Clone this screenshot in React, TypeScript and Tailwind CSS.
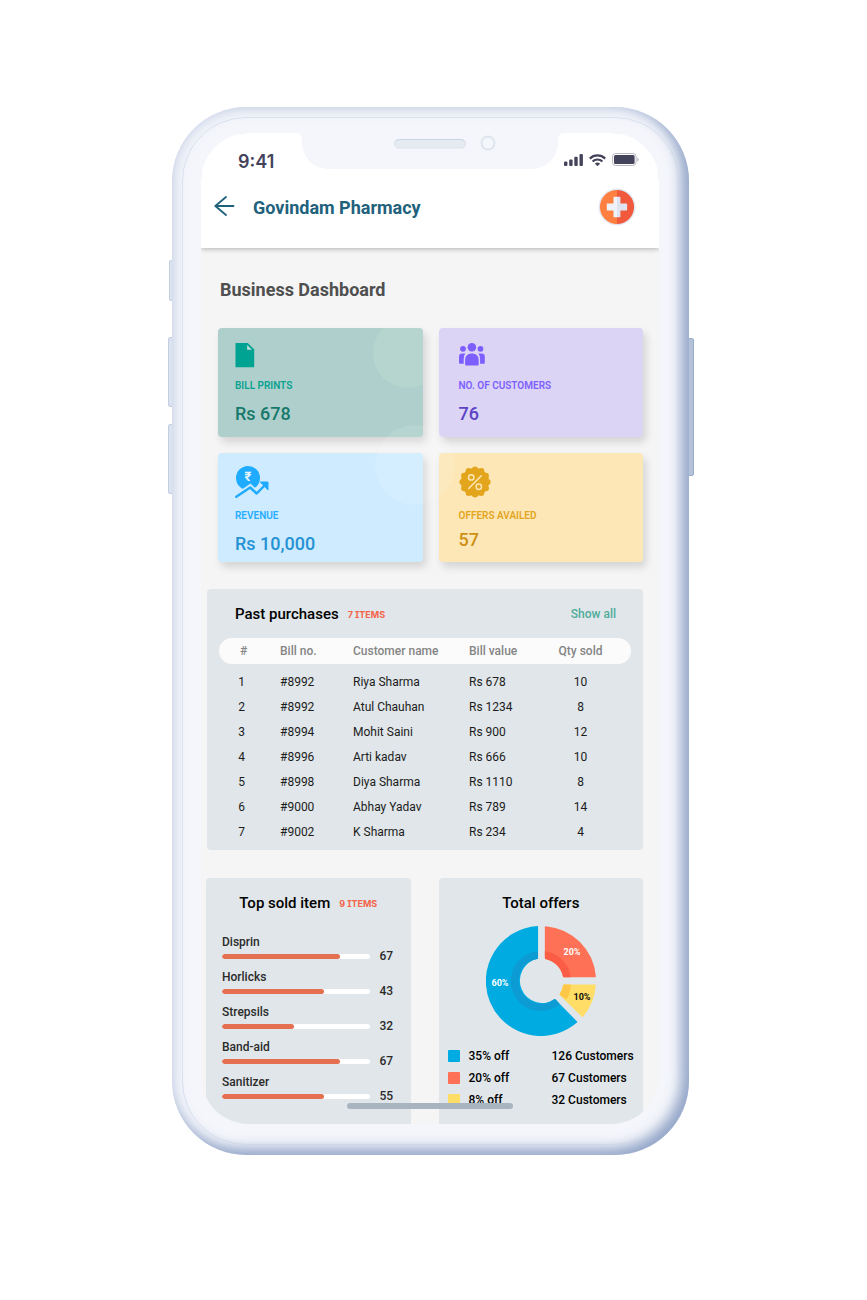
import React from "react";

const purchases = [
  ["1", "#8992", "Riya Sharma", "Rs 678", "10"],
  ["2", "#8992", "Atul Chauhan", "Rs 1234", "8"],
  ["3", "#8994", "Mohit Saini", "Rs 900", "12"],
  ["4", "#8996", "Arti kadav", "Rs 666", "10"],
  ["5", "#8998", "Diya Sharma", "Rs 1110", "8"],
  ["6", "#9000", "Abhay Yadav", "Rs 789", "14"],
  ["7", "#9002", "K Sharma", "Rs 234", "4"],
];

const topItems = [
  { name: "Disprin", sold: 67, fill: 80 },
  { name: "Horlicks", sold: 43, fill: 69 },
  { name: "Strepsils", sold: 32, fill: 49 },
  { name: "Band-aid", sold: 67, fill: 80 },
  { name: "Sanitizer", sold: 55, fill: 69 },
];

const offers = [
  { swatch: "bg-[#00abe1]", label: "35% off", customers: "126 Customers" },
  { swatch: "bg-[#ff7156]", label: "20% off", customers: "67 Customers" },
  { swatch: "bg-[#ffdd67]", label: "8% off", customers: "32 Customers" },
];

function FileIcon() {
  return (
    <svg className="h-[27px] w-5" viewBox="0 -1 20 27" aria-hidden="true">
      <path d="M.5 1h12.300l6.400 6.400v17.800H.5z" fill="#00a391" />
      <path d="M12.200 3v4.700h4.700z" fill="#c4ded9" />
    </svg>
  );
}

function PeopleIcon() {
  return (
    <svg className="h-[27px] w-[26px]" viewBox="0 -1 26 27" aria-hidden="true" fill="#7d5fff">
      <circle cx="12.900" cy="5.300" r="4.300" />
      <circle cx="4" cy="6.800" r="2.900" />
      <circle cx="21.500" cy="6.800" r="2.900" />
      <path d="M6.100 22.600v-5a6 6 0 0 1 6-6h1.600a6 6 0 0 1 6 6v5q0 1-1 1H7.100q-1 0-1-1z" />
      <path d="M6.300 11.600H3a3 3 0 0 0-3 3v6.200q0 .9.900.9h3.800v-4.500q0-3.300 1.600-5.600z" />
      <path d="M19.500 11.600h3.300a3 3 0 0 1 3 3v6.200q0 .9-.9.9h-3.800v-4.500q0-3.300-1.600-5.600z" />
    </svg>
  );
}

function RevenueIcon() {
  return (
    <svg className="h-8 w-[34px]" viewBox="0 0 34 32" aria-hidden="true">
      <circle cx="13" cy="12" r="12" fill="#1fabff" />
      <path d="M1.200 30.500 15.200 20.700l6.500 6L31 17" fill="none" stroke="#cfebff" strokeWidth="5" />
      <path d="M1.300 30.700 15.200 21.500l6.500 6L30 19" fill="none" stroke="#1fabff" strokeWidth="2.500" strokeLinecap="round" strokeLinejoin="round" />
      <path d="M25.300 16h7.700v7.900z" fill="#1fabff" stroke="#1fabff" strokeLinejoin="round" />
      <text x="13" y="15" textAnchor="middle" fontSize="13" fontWeight="700" fontFamily="Roboto, sans-serif" fill="#e8f6ff">₹</text>
    </svg>
  );
}

const lobes = Array.from({ length: 12 }, (_, i) => {
  const a = (i * Math.PI) / 6;
  return { x: 16 + 12.6 * Math.sin(a), y: 16 - 12.6 * Math.cos(a) };
});

function OfferIcon() {
  return (
    <svg className="h-8 w-8" viewBox="0 0 32 32" aria-hidden="true" fill="#e3a51c">
      <circle cx="16" cy="16" r="14" />
      {lobes.map((p, i) => (
        <circle key={i} cx={p.x} cy={p.y} r="3" />
      ))}
      <g fill="none" stroke="#fde7b7" strokeWidth="1.500" strokeLinecap="round">
        <path d="M22.300 9.800 9.700 22.500" />
        <circle cx="12.200" cy="11.400" r="2.700" />
        <circle cx="19.800" cy="20.800" r="2.700" />
      </g>
    </svg>
  );
}

type CardProps = {
  tone: string;
  icon: React.ReactNode;
  label: string;
  labelColor: string;
  value: string;
  valueColor: string;
  valueGap?: string;
  children?: React.ReactNode;
};

function StatCard({ tone, icon, label, labelColor, value, valueColor, valueGap = "mt-3", children }: CardProps) {
  return (
    <article className={`relative flex h-[109px] flex-col items-start overflow-hidden rounded-[4px] pt-[13px] shadow-[3px_5px_9px_rgba(0,0,0,0.14)] ${tone}`}>
      {children}
      {icon}
      <h2 className={`mt-3 text-[10px]/[12px] font-semibold ${labelColor}`}>{label}</h2>
      <p className={`text-[18px]/[20px] font-medium ${valueGap} ${valueColor}`}>{value}</p>
    </article>
  );
}

function ItemsTag({ children }: { children: React.ReactNode }) {
  return (
    <span className="pt-0.5 font-['Inter',sans-serif] text-[9px]/[18px] font-bold text-[#f5634a] [font-feature-settings:'cv08']">
      {children}
    </span>
  );
}

function StatusIcons() {
  return (
    <div className="flex items-center gap-[6px] pb-[3px]">
      <svg className="h-3 w-[19px]" viewBox="0 0 19 12" aria-hidden="true" fill="#44435c">
        <rect x="0" y="7.500" width="3.400" height="4.500" rx="1" />
        <rect x="5.200" y="5.500" width="3.400" height="6.500" rx="1" />
        <rect x="10.300" y="2.800" width="3.400" height="9.200" rx="1" />
        <rect x="15.500" y="0" width="3.400" height="12" rx="1" />
      </svg>
      <svg className="h-3 w-[17px]" viewBox="0 0 17 12" aria-hidden="true">
        <g fill="none" stroke="#44435c" strokeWidth="2.200">
          <path d="M.8 4.600a11 11 0 0 1 15.400 0" />
          <path d="M3.600 7.500a7 7 0 0 1 9.800 0" />
        </g>
        <path d="M5.900 9.700a3.800 3.800 0 0 1 5.200 0L8.500 12.200z" fill="#44435c" />
      </svg>
      <svg className="h-[13px] w-[27px]" viewBox="0 0 27 13" aria-hidden="true">
        <rect x=".5" y=".5" width="23.600" height="12" rx="3.200" fill="none" stroke="#b9b9c4" />
        <rect x="2" y="2" width="20.600" height="9" rx="1.500" fill="#44435c" />
        <path d="M25.300 4.300v4.400c.9-.4 1.400-1.200 1.400-2.200s-.5-1.800-1.400-2.200z" fill="#b9b9c4" />
      </svg>
    </div>
  );
}

function OffersChart() {
  return (
    <svg className="h-[110px] w-[110px]" viewBox="0 0 110 110" role="img" aria-label="Total offers by discount">
      <g strokeWidth="1.500" strokeLinejoin="round">
        <path d="M51.300 .8A54.300 54.300 0 1 0 90.500 96L69 74.100A23.200 23.200 0 1 1 51.300 32z" fill="#00abe1" stroke="#00abe1" />
        <path d="M59.600 .9A54.300 54.300 0 0 1 109.100 50.500H77.800A23.200 23.200 0 0 0 59.600 32.200z" fill="#ff7156" stroke="#ff7156" />
        <path d="M109.100 59.200A54.300 54.300 0 0 1 96.400 90.300L74.300 68.500A23.200 23.200 0 0 0 77.800 59.200z" fill="#ffdd67" stroke="#ffdd67" />
      </g>
      <path d="M52 25.200V32.700A22.500 22.500 0 1 0 68.400 73.100Q69.600 72.700 73.700 78.400A30 30 0 1 1 52 25.200z" fill="#0d9bd3" />
      <path d="M58.900 25.300A30 30 0 0 1 84.700 51.200H77.800Q77 51 76.900 50A22.500 22.500 0 0 0 59.600 32.900L58.900 32z" fill="#fa5c46" />
      <path d="M84.800 58.500A30 30 0 0 1 80.500 73.600L73.900 69Q73.300 68.200 73.900 67.400A22.500 22.500 0 0 0 77.200 59.400L77.800 58.500z" fill="#ffc747" />
      <g fontFamily="Roboto, sans-serif" fontSize="9" fontWeight="700" textAnchor="middle">
        <text x="14" y="59.500" fill="#fff">60%</text>
        <text x="86" y="29.300" fill="#fff">20%</text>
        <text x="96" y="73.500" fill="#0b0b0b">10%</text>
      </g>
    </svg>
  );
}

export default function App() {
  return (
    <main className="flex justify-center bg-white pt-[107px] pr-[6px] pb-[145px] font-['Roboto',sans-serif]">
      <div className="relative w-full max-w-[517px]">
        <span className="absolute top-[153px] -left-[3px] h-[41px] w-2 rounded-[2px] border border-[#c3cee0] bg-[#dbe3f0]" />
        <span className="absolute top-[230px] -left-[4px] h-[70px] w-2 rounded-[2px] border border-[#c3cee0] bg-[#dbe3f0]" />
        <span className="absolute top-[317px] -left-[4px] h-[70px] w-2 rounded-[2px] border border-[#c3cee0] bg-[#dbe3f0]" />
        <span className="absolute top-[231px] -right-[5px] h-[138px] w-2 rounded-[2px] border border-[#9badca] bg-[#b3c2d9]" />

        <div className="relative rounded-[74px] bg-[#f4f6fb] p-[10px] shadow-[inset_0_0_14px_2px_rgba(160,178,212,0.4),inset_-7px_-6px_13px_rgba(98,124,172,0.68)]">
          <div className="rounded-[64px] border border-[#c9d4e6]/60 pt-[15px] pr-[19px] pb-5 pl-[18px]">
            <div className="relative overflow-hidden rounded-[48px] bg-[#f5f5f5]">
              <header className="relative z-10 bg-white shadow-[0_1px_5px_rgba(0,0,0,0.28)]">
                <div className="flex h-14 items-center justify-between pr-5 pl-[37px]">
                  <time className="pt-0.5 font-['Inter',sans-serif] text-[18px]/[20px] font-semibold text-[#44435c]">9:41</time>
                  <StatusIcons />
                </div>
                <div className="flex h-[59px] items-center pr-[23px] pb-[21px] pl-[13px]">
                  <button type="button" aria-label="Back" className="pb-1">
                    <svg className="h-5 w-[21px]" viewBox="0 0 21 20" aria-hidden="true" fill="none" stroke="#22617c" strokeWidth="1.800" strokeLinecap="round" strokeLinejoin="round">
                      <path d="M12 1 1.300 10 12 19M1.300 10H19.500" />
                    </svg>
                  </button>
                  <p className="ml-[18px] flex-1 text-[18px]/[22px] font-bold text-[#22617c]">Govindam Pharmacy</p>
                  <svg className="mb-0.5 h-[38px] w-[38px]" viewBox="0 0 39 39" role="img" aria-label="Pharmacy logo">
                    <circle cx="19.500" cy="19.500" r="19" fill="#e3e7f1" />
                    <path d="M19.500 2a17.500 17.500 0 0 0 0 35z" fill="#ff7f41" />
                    <path d="M19.500 2a17.500 17.500 0 0 1 0 35z" fill="#f1593d" />
                    <path d="M16.500 9h3v21h-3q-.6 0-.6-.6V23H9.600q-.6 0-.6-.6v-5.800q0-.6.600-.6h6.300V9.600q0-.6.600-.6z" fill="#f0f2f9" />
                    <path d="M22.400 9h-2.900v21h2.900q.6 0 .6-.6V23h6.300q.6 0 .6-.6v-5.800q0-.6-.6-.6H23V9.600q0-.6-.6-.6z" fill="#dfe4f0" />
                  </svg>
                </div>
              </header>

              <div className="absolute top-0 left-1/2 z-20 w-[266px] -translate-x-1/2">
                <svg className="block h-9 w-[266px]" viewBox="0 0 266 36" aria-hidden="true">
                  <path d="M0 0q5 .5 5 8c0 17 11 28 28 28h200c17 0 28-11 28-28q0-7.500 5-8z" fill="#f4f6fb" />
                  <rect x="97.500" y="6.500" width="71" height="8.500" rx="4.200" fill="#e6ebf2" stroke="#d9e1ec" />
                  <path d="M98.500 8.500q1.500-2 4-2h61q2.500 0 4 2" fill="none" stroke="#c9d4e4" />
                  <circle cx="191" cy="10" r="6.500" fill="#f3f6fa" stroke="#dfe5ee" strokeWidth="2" />
                </svg>
              </div>

              <div className="pt-[31px] pr-4 pl-[5px]">
                <h1 className="ml-[14px] text-[18px]/[22px] font-bold text-[#4f4f4f]">Business Dashboard</h1>

                <section aria-label="Summary" className="relative mt-[27px] ml-3 grid grid-cols-2 gap-4">
                  <StatCard tone="bg-[#aecfcb] pl-[17px]" icon={<FileIcon />} label="BILL PRINTS" labelColor="text-[#0ba390]" value="Rs 678" valueColor="text-[#17796c]">
                    <span className="absolute -top-[10px] -right-5 h-[70px] w-[70px] rounded-full bg-[#c4dfd4]/40" />
                  </StatCard>
                  <StatCard tone="bg-[#dbd4f5] pl-5" icon={<PeopleIcon />} label="NO. OF CUSTOMERS" labelColor="text-[#7d5fff]" value="76" valueColor="text-[#5b43c6]" />
                  <StatCard tone="bg-[#cfebff] pl-[17px]" icon={<RevenueIcon />} label="REVENUE" labelColor="text-[#26adff]" value="Rs 10,000" valueColor="text-[#2592d4]" />
                  <StatCard tone="bg-[#fde7b7] pl-5" icon={<OfferIcon />} label="OFFERS AVAILED" labelColor="text-[#e3a51c]" value="57" valueColor="text-[#cd9014]" valueGap="mt-2" />
                  <span className="pointer-events-none absolute top-[97px] left-[157px] h-20 w-20 rounded-full bg-white/10" />
                </section>

                <section className="mt-[27px] ml-px rounded-[4px] bg-[#e0e6e9] pt-[15px] pr-3 pb-[6px] pl-3">
                  <div className="flex items-center pr-[15px] pl-4 leading-5">
                    <h2 className="mr-[9px] text-[15px]/[20px] font-medium text-black">Past purchases</h2>
                    <ItemsTag>7 ITEMS</ItemsTag>
                    <a href="#purchases" className="ml-auto text-[12px]/[20px] font-medium text-[#4fac9b]">Show all</a>
                  </div>
                  <table id="purchases" className="mt-[14px] w-full table-fixed border-separate border-spacing-0 text-left text-[12px]/[16px] text-[#1c1c1c]">
                    <thead>
                      <tr className="h-[26px] text-[#858585] *:bg-[#fbfbfb] *:p-0 *:font-medium">
                        <th scope="col" className="w-[61px] rounded-l-full"><span className="block pr-3 text-center">#</span></th>
                        <th scope="col" className="w-[73px]">Bill no.</th>
                        <th scope="col" className="w-[116px]">Customer name</th>
                        <th scope="col" className="w-[61px]">Bill value</th>
                        <th scope="col" className="rounded-r-full"><span className="block text-center">Qty sold</span></th>
                      </tr>
                    </thead>
                    <tbody className="before:block before:h-[5px]">
                      {purchases.map(([n, bill, name, value, qty]) => (
                        <tr key={n} className="h-[25px] *:p-0">
                          <td><span className="block pr-4 text-center">{n}</span></td>
                          <td>{bill}</td>
                          <td>{name}</td>
                          <td>{value}</td>
                          <td className="text-center">{qty}</td>
                        </tr>
                      ))}
                    </tbody>
                  </table>
                </section>

                <div className="mt-7 grid grid-cols-2 gap-7">
                  <section className="rounded-t-[4px] bg-[#e0e6e9] pt-[15px] pr-4 pb-[19px] pl-4">
                    <div className="flex items-center justify-center">
                      <h2 className="mr-[9px] text-[15px]/[20px] font-medium text-black">Top sold item</h2>
                      <ItemsTag>9 ITEMS</ItemsTag>
                    </div>
                    <ul className="mt-[22px] flex flex-col gap-[7px] text-[12px]/[14px] font-medium text-[#2b2b2b]">
                      {topItems.map((item) => (
                        <li key={item.name}>
                          {item.name}
                          <div className="flex items-center gap-[10px]">
                            <div className="h-[5px] flex-1 overflow-hidden rounded-full bg-white">
                              <div className="h-full rounded-full bg-[#e57051]" style={{ width: `${item.fill}%` }} />
                            </div>
                            <span className="w-[15px]">{item.sold}</span>
                          </div>
                        </li>
                      ))}
                    </ul>
                  </section>

                  <section className="rounded-t-[4px] bg-[#e0e6e9] pt-[15px] pb-[13px]">
                    <h2 className="text-center text-[15px]/[20px] font-medium text-black">Total offers</h2>
                    <div className="mt-[13px] flex justify-center">
                      <OffersChart />
                    </div>
                    <ul className="mt-[9px] pl-[9px] text-[12px]/[22px] font-medium text-black">
                      {offers.map((offer) => (
                        <li key={offer.label} className="flex items-center">
                          <span className={`mr-[9px] size-3 rounded-[1px] ${offer.swatch}`} />
                          <span className="w-[83px]">{offer.label}</span>
                          <span className="whitespace-nowrap">{offer.customers}</span>
                        </li>
                      ))}
                    </ul>
                  </section>
                </div>
              </div>

              <span className="absolute bottom-[15px] left-1/2 h-[6px] w-[166px] -translate-x-1/2 rounded-full bg-[#a9b4c1]" />
            </div>
          </div>
        </div>
      </div>
    </main>
  );
}
